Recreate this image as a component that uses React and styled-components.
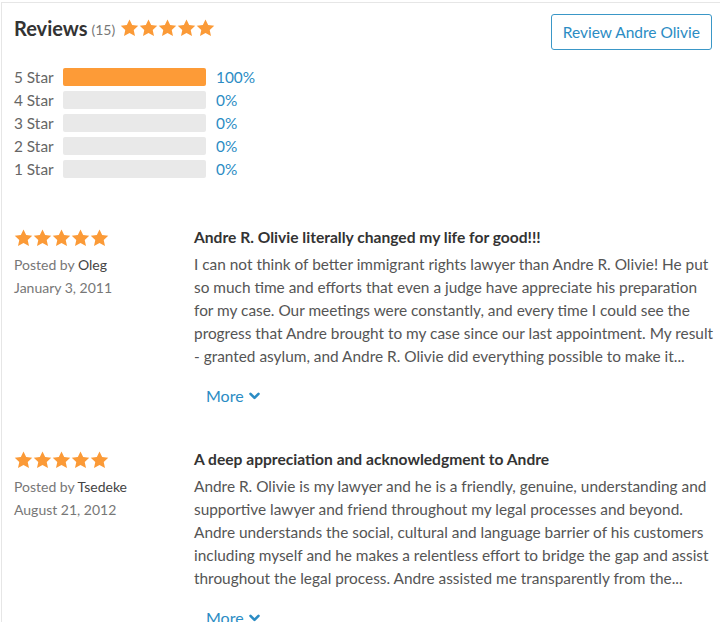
import React from 'react';
import styled, {createGlobalStyle} from "styled-components";

const GlobalStyle = createGlobalStyle`
  body {
    margin: 0;
    background: #fff;
    font-family: Lato, "Open Sans", sans-serif;
  }
`

const Page = styled.div`
  padding: 2px 0 0 1px;
  overflow: hidden;
`

const Panel = styled.section`
  width: 760px;
  height: 620px;
  overflow: hidden;
  box-sizing: border-box;
  border-top: 1px solid #e6e6e6;
  border-left: 1px solid #e6e6e6;
  padding: 11px 0 0 12px;
`

const Inner = styled.div`
  width: 698px;
`

const Header = styled.div`
  display: flex;
  justify-content: space-between;
  align-items: center;
  height: 36px;
`

const TitleGroup = styled.div`
  display: flex;
  align-items: center;
  margin-bottom: 8px;
`

const Title = styled.h1`
  margin: 0;
  font-size: 20px;
  font-weight: 700;
  color: #333;
`

const Count = styled.span`
  font-size: 14px;
  color: #777;
  margin: 2px 5px 0 4px;
`

const Stars = styled.div`
  display: flex;
  color: #fb9a37;
`

const ReviewButton = styled.button`
  height: 36px;
  padding: 0 11px;
  border: 1px solid #3a97c7;
  border-radius: 3px;
  background: #fff;
  color: #2b8cc4;
  font-family: inherit;
  font-size: 15.5px;
`

const Breakdown = styled.div`
  display: flex;
  flex-direction: column;
  gap: 5px;
  margin-top: 18px;
`

const BarRow = styled.div`
  display: grid;
  grid-template-columns: 39px 143px auto;
  align-items: center;
  column-gap: 10px;
  height: 18px;
  font-size: 15.4px;
  white-space: nowrap;
`

const BarLabel = styled.span`
  color: #666;
`

const Track = styled.div`
  height: 18px;
  border-radius: 2px;
  background: #e9e9e9;
  overflow: hidden;
`

const Fill = styled.div`
  height: 100%;
  background: #fd9b37;
`

const Percent = styled.span`
  color: #2b8cc4;
`

const ReviewList = styled.div`
  display: flex;
  flex-direction: column;
  gap: 41px;
  margin-top: 48px;
`

const Review = styled.article`
  display: grid;
  grid-template-columns: 180px 1fr;
`

const Meta = styled.div`
  display: flex;
  flex-direction: column;
  font-size: 14px;
  line-height: 23px;
  color: #777;
`

const MetaStars = styled(Stars)`
  height: 23px;
  align-items: center;
  margin-bottom: 4px;
`

const Author = styled.span`
  color: #444;
`

const Body = styled.div`
  display: flex;
  flex-direction: column;
`

const ReviewTitle = styled.h3`
  margin: 0 0 4px;
  font-size: 15.6px;
  line-height: 23px;
  font-weight: 700;
  color: #333;
`

const Text = styled.p`
  margin: 0;
  font-size: 15.4px;
  line-height: 23px;
  color: #555;
  white-space: nowrap;
`

const More = styled.a`
  display: flex;
  align-items: center;
  gap: 5px;
  margin: 16px 0 0 12px;
  line-height: 23px;
  font-size: 16px;
  color: #2b8cc4;
  cursor: pointer;
`

const Star = () => (
  <svg width="19" height="18" viewBox="0 0 24 23" fill="currentColor">
    <path d="M12 0.6l3.4 7 7.8 1-5.8 5.4 1.6 7.8L12 17.9l-7 3.9 1.6-7.8L0.8 8.6l7.8-1z"/>
  </svg>
)

const FiveStars = () => (
  <>
    {[0, 1, 2, 3, 4].map(i => <Star key={i}/>)}
  </>
)

const Chevron = () => (
  <svg width="11" height="8" viewBox="0 0 11 8">
    <path d="M1.5 1.8l4 4 4-4" fill="none" stroke="currentColor" strokeWidth="2.6" strokeLinecap="round" strokeLinejoin="round"/>
  </svg>
)

const breakdown = [
  {label: '5 Star', value: 100},
  {label: '4 Star', value: 0},
  {label: '3 Star', value: 0},
  {label: '2 Star', value: 0},
  {label: '1 Star', value: 0},
]

const reviews = [
  {
    author: 'Oleg',
    date: 'January 3, 2011',
    title: 'Andre R. Olivie literally changed my life for good!!!',
    lines: [
      'I can not think of better immigrant rights lawyer than Andre R. Olivie! He put',
      'so much time and efforts that even a judge have appreciate his preparation',
      'for my case. Our meetings were constantly, and every time I could see the',
      'progress that Andre brought to my case since our last appointment. My result',
      '- granted asylum, and Andre R. Olivie did everything possible to make it...',
    ],
  },
  {
    author: 'Tsedeke',
    date: 'August 21, 2012',
    title: 'A deep appreciation and acknowledgment to Andre',
    lines: [
      'Andre R. Olivie is my lawyer and he is a friendly, genuine, understanding and',
      'supportive lawyer and friend throughout my legal processes and beyond.',
      'Andre understands the social, cultural and language barrier of his customers',
      'including myself and he makes a relentless effort to bridge the gap and assist',
      'throughout the legal process. Andre assisted me transparently from the...',
    ],
  },
]

const App = () => {
  return (
    <Page>
      <GlobalStyle/>
      <Panel>
        <Inner>
          <Header>
            <TitleGroup>
              <Title>Reviews</Title>
              <Count>(15)</Count>
              <Stars><FiveStars/></Stars>
            </TitleGroup>
            <ReviewButton>Review Andre Olivie</ReviewButton>
          </Header>
          <Breakdown>
            {breakdown.map(row => (
              <BarRow key={row.label}>
                <BarLabel>{row.label}</BarLabel>
                <Track>
                  <Fill style={{width: `${row.value}%`}}/>
                </Track>
                <Percent>{row.value}%</Percent>
              </BarRow>
            ))}
          </Breakdown>
          <ReviewList>
            {reviews.map(r => (
              <Review key={r.author}>
                <Meta>
                  <MetaStars><FiveStars/></MetaStars>
                  <span>Posted by <Author>{r.author}</Author></span>
                  <span>{r.date}</span>
                </Meta>
                <Body>
                  <ReviewTitle>{r.title}</ReviewTitle>
                  {r.lines.map(line => <Text key={line}>{line}</Text>)}
                  <More>More <Chevron/></More>
                </Body>
              </Review>
            ))}
          </ReviewList>
        </Inner>
      </Panel>
    </Page>
  );
};

export default App;
